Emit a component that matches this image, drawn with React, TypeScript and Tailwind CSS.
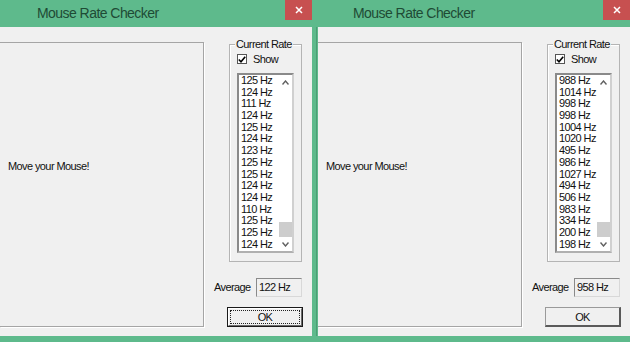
import React from 'react'

type WindowProps = {
  rates: number[]
  average: string
  focused?: boolean
  titleLeft?: string
}

const leftRates = [125, 124, 111, 124, 125, 124, 123, 125, 125, 124, 124, 110, 125, 125, 124]
const rightRates = [988, 1014, 998, 998, 1004, 1020, 495, 986, 1027, 494, 506, 983, 334, 200, 198]

function Chevron({ up }: { up?: boolean }) {
  return (
    <svg width="7" height="5" viewBox="0 0 7 5" className="text-[#606060]">
      <polyline
        points={up ? '0.5,4.5 3.5,1 6.5,4.5' : '0.5,0.5 3.5,4 6.5,0.5'}
        fill="none"
        stroke="currentColor"
        strokeWidth="1.4"
      />
    </svg>
  )
}

function OkButton({ focused }: { focused?: boolean }) {
  if (focused) {
    return (
      <div className="ml-[15px] mt-[10px] h-[20px] w-[76px] border border-[#1a1a1a]">
        <div className="h-full w-full border border-b-[#6b6b6b] border-l-white border-r-[#6b6b6b] border-t-white p-[1px]">
          <div className="flex h-full w-full items-center justify-center border border-dotted border-[#222] text-[11px] leading-[12px] text-[#111]">
            OK
          </div>
        </div>
      </div>
    )
  }
  return (
    <div className="ml-[15px] mt-[10px] flex h-[20px] w-[76px] items-center justify-center border border-b-2 border-r-2 border-b-[#5a5a5a] border-l-[#9a9a9a] border-r-[#5a5a5a] border-t-[#9a9a9a] text-[11px] leading-[12px] text-[#111]">
      OK
    </div>
  )
}

function RateWindow({ rates, average, focused, titleLeft = 'pl-[37px]' }: WindowProps) {
  return (
    <div className="flex flex-col">
      <div className="flex h-[27px] items-start">
        <div className={`flex-1 pt-[4px] text-[14px] leading-[18px] tracking-[-0.55px] text-[#1f4b35] ${titleLeft}`}>
          Mouse Rate Checker
        </div>
        <div className="flex h-[20px] w-[27px] items-center justify-center bg-[#c75050]">
          <svg width="8" height="8" viewBox="0 0 8 8">
            <path d="M1 1 L7 7 M7 1 L1 7" stroke="white" strokeWidth="1.5" />
          </svg>
        </div>
      </div>

      <div className="flex h-[309px] w-[312px] bg-[#f0f0f0] text-[11px] tracking-[-0.6px] text-[#111]">
        <div className="mt-[15px] h-[285px] w-[204px] border border-l-0 border-[#a5a5a5] shadow-[1px_1px_0_#fff]">
          <div className="pl-[8px] pt-[117px] leading-[13px]">Move your Mouse!</div>
        </div>

        <div className="ml-[8px] flex w-[91px] flex-col">
          <div className="relative ml-[17px] mt-[17px] h-[218px] w-[73px] border border-[#b4b4b4] shadow-[inset_1px_1px_0_#fff]">
            <span className="absolute left-[5px] top-[-7px] bg-[#f0f0f0] px-[1px] leading-[13px]">
              Current Rate
            </span>
            <div className="ml-[7px] mt-[9px] flex h-[10px] items-center gap-[6px]">
              <div className="flex h-[10px] w-[10px] items-center justify-center border border-[#555] bg-white">
                <svg width="8" height="7" viewBox="0 0 8 7">
                  <polyline points="0.8,3.5 3,5.8 7.2,0.8" fill="none" stroke="#000" strokeWidth="1.6" />
                </svg>
              </div>
              <span className="leading-[10px]">Show</span>
            </div>

            <div className="ml-[7px] mt-[9px] flex h-[180px] w-[57px] border-2 border-b-[#b0b0b0] border-l-[#8a8a8a] border-r-[#d0d0d0] border-t-[#8a8a8a] bg-white">
              <div className="flex-1 pl-[2px]">
                {rates.map((r, i) => (
                  <div key={i} className="h-[11.7px] leading-[11.7px]">
                    {r} Hz
                  </div>
                ))}
              </div>
              <div className="flex w-[14px] flex-col">
                <div className="flex h-[14px] items-center justify-center">
                  <Chevron up />
                </div>
                <div className="flex flex-1 flex-col justify-end pl-[1px]">
                  <div className="h-[15px] bg-[#cdcdcd]" />
                </div>
                <div className="flex h-[14px] items-center justify-center">
                  <Chevron />
                </div>
              </div>
            </div>
          </div>

          <div className="mt-[16px] flex h-[19px] items-center pl-[2px]">
            <span className="w-[42px]">Average</span>
            <div className="flex h-[19px] w-[46px] items-center border border-b-[#d8d8d8] border-l-[#8a8a8a] border-r-[#d8d8d8] border-t-[#8a8a8a] pl-[2px]">
              {average}
            </div>
          </div>

          <OkButton focused={focused} />
        </div>
      </div>
    </div>
  )
}

export default function App() {
  return (
    <div className="flex h-[342px] w-[630px] overflow-hidden bg-[#5eba8c] font-['Liberation_Sans',Arial,sans-serif]">
      <RateWindow rates={leftRates} average="122 Hz" focused />
      <div className="w-[4px]" />
      <div className="mt-[27px] h-[309px] w-[1px] bg-[#4c9d74]" />
      <div className="w-[1px]" />
      <RateWindow rates={rightRates} average="958 Hz" titleLeft="pl-[35px]" />
    </div>
  )
}
